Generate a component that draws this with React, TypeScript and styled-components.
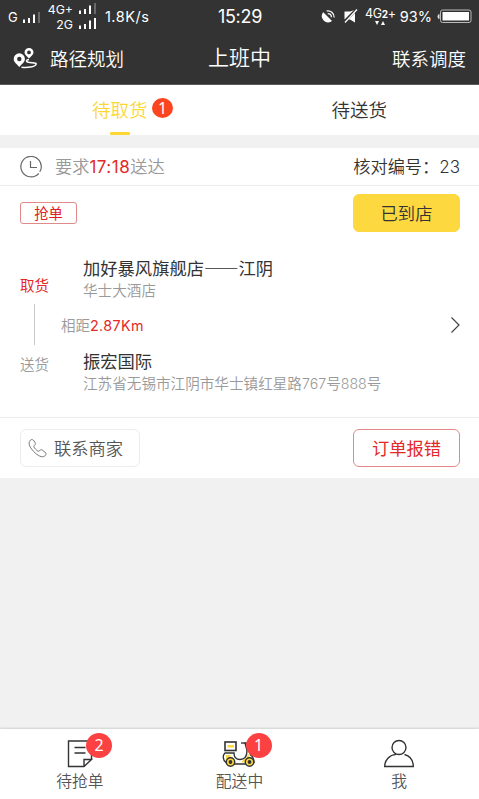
import React from 'react';
import styled, { createGlobalStyle } from 'styled-components';

const GlobalStyle = createGlobalStyle`
  *, *::before, *::after { box-sizing: border-box; }
  body { margin: 0; background: #f1f1f1; }
`;

const Screen = styled.div`
  display: flex;
  flex-direction: column;
  width: 479px;
  height: 799px;
  overflow: hidden;
  background: #f1f1f1;
  color: #333;
  font-family: 'Noto Sans CJK SC', sans-serif;
  font-weight: 350;
  white-space: nowrap;
  svg { display: block; flex: none; }
`;

const StatusBar = styled.header`
  display: grid;
  grid-template-columns: 1fr auto 1fr;
  align-items: center;
  height: 32px;
  padding: 0 7px 0 8px;
  background: #333;
  color: #fff;
  font-family: Inter, sans-serif;
  font-weight: 400;
`;
const StatusGroup = styled.div<{ $end?: boolean }>`
  display: flex;
  align-items: center;
  justify-content: ${(p) => (p.$end ? 'flex-end' : 'flex-start')};
`;
const Carrier = styled.div`
  display: flex;
  align-items: center;
  gap: 4px;
  font-size: 13px;
  line-height: 14px;
  padding-top: 2px;
`;
const SimStack = styled.div`
  display: flex;
  flex-direction: column;
  align-items: flex-end;
  margin-left: 7px;
  padding-top: 2px;
`;
const SimRow = styled.div`
  display: flex;
  align-items: center;
  gap: 5px;
  font-size: 12.3px;
  line-height: 15px;
  svg { margin-bottom: 2px; }
`;
const Speed = styled.span`
  margin-left: 8px;
  font-size: 14.5px;
  letter-spacing: 0.5px;
`;
const Clock = styled.time`
  font-size: 18px;
  letter-spacing: -0.3px;
`;
const Network = styled.div`
  display: flex;
  flex-direction: column;
  align-items: center;
  margin: 0 4px 0 7px;
  font-size: 12.5px;
  line-height: 13px;
  letter-spacing: -0.3px;
  b { font-size: 10px; }
`;
const Percent = styled.span`
  margin-right: 5px;
  font-size: 14.5px;
`;
const StatusIcon = styled.span`
  margin-right: 8px;
`;

const TitleBar = styled.div`
  display: grid;
  grid-template-columns: 1fr auto 1fr;
  align-items: center;
  height: 53px;
  padding: 0 13px;
  background: #333;
  border-bottom: 1px solid #5a5a5a;
  color: #fff;
  font-size: 18.5px;
  line-height: 52px;
`;
const RouteLink = styled.a`
  display: flex;
  align-items: center;
  gap: 12px;
`;
const Title = styled.h1`
  margin: 0;
  font-size: 21px;
  font-weight: 350;
  line-height: 48px;
  padding-bottom: 4px;
`;
const Dispatch = styled.a`
  text-align: right;
`;

const Tabs = styled.nav`
  display: grid;
  grid-template-columns: 1fr 1fr;
  flex: none;
  height: 50px;
  background: #fff;
`;
const Tab = styled.a<{ $active?: boolean }>`
  position: relative;
  display: flex;
  justify-content: center;
  font-size: 18.5px;
  line-height: 48px;
  color: ${(p) => (p.$active ? '#fdd835' : '#333')};
  &::after {
    content: '';
    display: ${(p) => (p.$active ? 'block' : 'none')};
    position: absolute;
    bottom: 0;
    width: 20px;
    height: 3px;
    border-radius: 1px;
    background: #fdd835;
  }
`;
const Badge = styled.span<{ $size: number; $left: number; $top: number; $color: string }>`
  position: absolute;
  left: ${(p) => p.$left}px;
  top: ${(p) => p.$top}px;
  width: ${(p) => p.$size}px;
  height: ${(p) => p.$size - 1}px;
  border-radius: 50%;
  background: ${(p) => p.$color};
  color: #fff;
  font-family: 'Noto Sans', sans-serif;
  font-size: 16px;
  font-weight: 400;
  line-height: ${(p) => p.$size - 1}px;
  text-align: center;
`;

const Card = styled.article`
  flex: none;
  height: 330px;
  margin-top: 13px;
  background: #fff;
`;
const CardHead = styled.div`
  display: flex;
  align-items: center;
  height: 38px;
  padding: 0 19px 0 20px;
  border-bottom: 1px solid #ececec;
  font-size: 17.2px;
  line-height: 38px;
`;
const Deadline = styled.div`
  flex: 1;
  margin-left: 13px;
  color: #999;
`;
const Accent = styled.span<{ $size?: number; $spacing?: number }>`
  color: #e42828;
  font-family: Inter, sans-serif;
  font-weight: 400;
  font-size: ${(p) => p.$size ?? 17}px;
  letter-spacing: ${(p) => p.$spacing ?? 0}px;
`;
const Figure = styled.span<{ $size?: number }>`
  font-family: Inter, sans-serif;
  font-weight: 350;
  font-size: ${(p) => p.$size ?? 14.2}px;
`;
const ActionRow = styled.div`
  display: flex;
  align-items: flex-start;
  justify-content: space-between;
  height: 66px;
  padding: 8px 19px 0 20px;
`;
const Tag = styled.span`
  width: 57px;
  height: 22px;
  margin-top: 8px;
  border: 1px solid #e08a8a;
  border-radius: 3px;
  color: #e02020;
  font-size: 14.3px;
  font-weight: 400;
  line-height: 20px;
  text-align: center;
`;
const Button = styled.button<{ $kind: 'primary' | 'danger' | 'plain' }>`
  display: flex;
  align-items: center;
  justify-content: ${(p) => (p.$kind === 'plain' ? 'flex-start' : 'center')};
  gap: 7px;
  width: ${(p) => (p.$kind === 'plain' ? 120 : 107)}px;
  height: 38px;
  padding: 0 7px;
  border: 1px solid ${(p) => ({ primary: '#fdd83f', danger: '#e08a8a', plain: '#ececec' })[p.$kind]};
  border-radius: 6px;
  background: ${(p) => (p.$kind === 'primary' ? '#fdd83f' : '#fff')};
  color: ${(p) => ({ primary: '#333', danger: '#e42828', plain: '#555' })[p.$kind]};
  font: inherit;
  font-weight: ${(p) => (p.$kind === 'danger' ? 400 : 350)};
  font-size: 17.3px;
  line-height: 36px;
`;

const Route = styled.section`
  display: grid;
  grid-template-columns: 41px 1fr auto;
  height: 165px;
  padding: 0 19px 0 20px;
`;
const Stages = styled.div`
  display: flex;
  flex-direction: column;
  padding-top: 21px;
`;
const Stage = styled.span<{ $active?: boolean }>`
  color: ${(p) => (p.$active ? '#e42828' : '#999')};
  font-size: 14.5px;
  font-weight: ${(p) => (p.$active ? 400 : 350)};
  line-height: 24px;
`;
const Connector = styled.i`
  width: 1px;
  height: 41px;
  margin: 7px 0 7px 14px;
  background: #c8c8c8;
`;
const Stops = styled.div`
  padding-top: 3px;
`;
const Place = styled.h2`
  margin: 0 0 0 22px;
  font-size: 17.3px;
  font-weight: 400;
  line-height: 25px;
`;
const Dash = styled.span`
  font-family: 'Noto Sans CJK JP', sans-serif;
  font-weight: 350;
  line-height: 1;
`;
const Address = styled.p`
  margin: 0 0 0 22px;
  color: #999;
  font-size: 14.6px;
  line-height: 20px;
`;
const Distance = styled.p`
  margin: 13px 0 10px;
  color: #999;
  font-size: 14.5px;
  line-height: 24px;
`;
const Arrow = styled.div`
  align-self: start;
  padding-top: 65px;
`;
const CardFoot = styled.footer`
  display: flex;
  justify-content: space-between;
  height: 61px;
  padding: 11px 19px 0 20px;
  border-top: 1px solid #ececec;
`;

const BottomNav = styled.nav`
  display: grid;
  grid-template-columns: repeat(3, 1fr);
  flex: none;
  height: 70px;
  margin-top: auto;
  background: #fff;
  box-shadow: 0 -1px 2px rgba(0, 0, 0, 0.14);
`;
const NavItem = styled.a`
  position: relative;
  display: flex;
  flex-direction: column;
  align-items: center;
  padding-top: 10px;
  color: #555;
  font-size: 15.8px;
  line-height: 24px;
  svg { margin-bottom: 1px; }
`;

function Signal({ full }: { full?: boolean }) {
  return (
    <svg width="19" height="11" viewBox="0 0 19 11">
      <path d="M2 11V7.500M7 11V6M12 11V2.500" stroke="#fff" strokeWidth="2" />
      <path d="M17 11V0" stroke={full ? '#fff' : '#696969'} strokeWidth="2" />
    </svg>
  );
}

function DishIcon() {
  return (
    <svg width="15" height="15" viewBox="0 0 15 15" fill="none" stroke="#fff">
      <path d="M2.300 4.400 9.800 11.900A5.500 5.500 0 0 1 2.300 4.400Z" fill="#fff" strokeWidth="1.500" />
      <path d="M5.500 2c4-1 7.700 2.200 7.700 6.500M6.700 4.700c2.100 0 3.700 1.400 3.700 3.500" strokeWidth="1.200" />
    </svg>
  );
}

function MuteIcon() {
  return (
    <svg width="14" height="14" viewBox="0 0 14 14">
      <path d="M.5 2.500H6L11 1v12.500L6 10.500H.5Z" fill="#fff" />
      <path d="M0 13 13 0" stroke="#333" strokeWidth="2.800" />
      <path d="M1 13.500 13 .5" stroke="#fff" strokeWidth="1.300" />
    </svg>
  );
}

function BatteryIcon() {
  return (
    <svg width="35" height="15" viewBox="0 0 35 15">
      <path d="M2.500 5Q.5 5 .5 7.500T2.500 10Z" fill="#ddd" />
      <rect x="3.500" y="1" width="30.500" height="12.500" rx="2" fill="none" stroke="#bbb" />
      <rect x="5.500" y="3" width="26.500" height="8.500" fill="#fff" />
    </svg>
  );
}

function RouteIcon() {
  return (
    <svg width="25" height="21" viewBox="0 0 25 21">
      <path
        fill="#fff"
        fillRule="evenodd"
        d="M6.300 5.300a5.600 5.600 0 0 0-5.600 5.600c0 3.200 3.300 5.200 5.600 8 2.300-2.800 5.600-4.800 5.600-8a5.600 5.600 0 0 0-5.600-5.600Zm0 3.500a2.200 2.200 0 1 1 0 4.400 2.200 2.200 0 0 1 0-4.400ZM16 0a4.500 4.500 0 0 0-4.500 4.500c0 2.300 2.600 3.800 4.500 6 1.900-2.200 4.500-3.700 4.500-6A4.500 4.500 0 0 0 16 0Zm0 2.500a1.900 1.900 0 1 1 0 3.800 1.900 1.900 0 0 1 0-3.800Z"
      />
      <path
        d="M16 11.500c-3 .3-3.500 2.300-.5 2.800 5 .700 8.500.400 7.500 2.200-1.300 2.500-8.500 3.500-14.500 2.700"
        fill="none"
        stroke="#fff"
        strokeWidth="1.500"
      />
    </svg>
  );
}

function ClockIcon() {
  return (
    <svg width="22" height="22" viewBox="0 0 22 22" fill="none" stroke="#666" strokeWidth="1.200">
      <path d="M18.800 17.300A10.200 10.200 0 1 1 20.700 14M20.700 14l-1 1.800M10.500 5v6.500H17" />
    </svg>
  );
}

function PhoneIcon() {
  return (
    <svg width="19" height="19" viewBox="0 0 19 19" fill="none" stroke="#777" strokeWidth="1">
      <path d="M2.300 1.300C3.700 0 5 .5 6 1.900l1 1.700c.8 1.300.3 2-.8 3-.9.700-.4 1.700 1.400 3.600s3 2.500 3.700 1.700c1-1.100 1.900-1.600 3-.8l2.600 2c1.500 1.200 1.500 2.300.2 3.600-2 1.900-5.400 1.300-9.900-2.700C2.500 9.700-.8 4.200 2.300 1.300Z" />
    </svg>
  );
}

function NoteIcon() {
  return (
    <svg width="26" height="29" viewBox="0 0 26 29" fill="none" stroke="#333" strokeWidth="1.400">
      <path d="M24.500 20.500V2H1.500v25.500H17l7.500-7H17v7M7.500 8.500h11M7.500 14h11" />
    </svg>
  );
}

function ScooterIcon() {
  return (
    <svg width="34" height="29" viewBox="0 0 34 29" fill="none" stroke="#333" strokeWidth="1.400">
      <path
        d="M3 14h9c0 5 2.500 6.500 6 6.500 5 0 7-4 7-9l-2-7.500h3l2.500 12c2.500 1.500 3.500 4 3.500 7.500H29L23 25H12l-8-1.500C.5 21 .5 16 3 14Z"
        fill="#fff"
      />
      <path d="M4 16h4.500c0 3.500 2 6 5.500 6.500l-1 1.500H4ZM26 14l-1 4c-2 1-3 3-5 4v1.500l5-.5c1-2 2-4 2.500-4Z" fill="#fdd83f" stroke="none" />
      <path d="M19 4h4" />
      <rect x="3" y="3" width="11" height="8.500" fill="#fff" strokeWidth="1.600" />
      <path d="M5.500 6h6.500v2.500H5.500Z" fill="#fdd83f" stroke="none" />
      <circle cx="8.500" cy="23" r="4.200" fill="#fdd83f" />
      <circle cx="27.500" cy="23" r="4.200" fill="#fdd83f" />
      <circle cx="8.500" cy="23" r="1.200" fill="#333" />
      <circle cx="27.500" cy="23" r="1.200" fill="#333" />
    </svg>
  );
}

function PersonIcon() {
  return (
    <svg width="32" height="29" viewBox="0 0 32 29" fill="none" stroke="#333" strokeWidth="1.400">
      <circle cx="16" cy="8.500" r="7" />
      <path d="M13 15.400C6.500 16 1.700 21 1.700 27.500h28.600c0-6.300-3.500-10.500-8.800-12" />
    </svg>
  );
}

export default function App() {
  return (
    <Screen lang="zh-CN">
      <GlobalStyle />
      <StatusBar>
        <StatusGroup>
          <Carrier>G <Signal /></Carrier>
          <SimStack>
            <SimRow>4G+ <Signal /></SimRow>
            <SimRow>2G <Signal full /></SimRow>
          </SimStack>
          <Speed>1.8K/s</Speed>
        </StatusGroup>
        <Clock>15:29</Clock>
        <StatusGroup $end>
          <StatusIcon><DishIcon /></StatusIcon>
          <MuteIcon />
          <Network>
            <span>4G<b>2</b>+</span>
            <svg width="10" height="4" viewBox="0 0 10 4" fill="#fff">
              <path d="M0 0h4L2 4ZM6 4h4L8 0Z" />
            </svg>
          </Network>
          <Percent>93%</Percent>
          <BatteryIcon />
        </StatusGroup>
      </StatusBar>
      <TitleBar>
        <RouteLink><RouteIcon />路径规划</RouteLink>
        <Title>上班中</Title>
        <Dispatch>联系调度</Dispatch>
      </TitleBar>

      <Tabs>
        <Tab $active>
          待取货
          <Badge $size={21} $left={152} $top={13} $color="#fb4420">1</Badge>
        </Tab>
        <Tab>待送货</Tab>
      </Tabs>

      <Card>
        <CardHead>
          <ClockIcon />
          <Deadline>要求<Accent $spacing={0.5}>17:18</Accent>送达</Deadline>
          <div>核对编号：<Figure $size={17}>23</Figure></div>
        </CardHead>
        <ActionRow>
          <Tag>抢单</Tag>
          <Button $kind="primary">已到店</Button>
        </ActionRow>
        <Route>
          <Stages>
            <Stage $active>取货</Stage>
            <Connector />
            <Stage>送货</Stage>
          </Stages>
          <Stops>
            <Place>加好暴风旗舰店<Dash lang="ja">——</Dash>江阴</Place>
            <Address>华士大酒店</Address>
            <Distance>相距<Accent $size={14.3} $spacing={0.4}>2.87Km</Accent></Distance>
            <Place>振宏国际</Place>
            <Address>江苏省无锡市江阴市华士镇红星路<Figure>767</Figure>号<Figure>888</Figure>号</Address>
          </Stops>
          <Arrow>
            <svg width="9" height="16" viewBox="0 0 9 16" fill="none" stroke="#444" strokeWidth="1.200">
              <path d="m.5.500 7.500 7.500-7.500 7.500" />
            </svg>
          </Arrow>
        </Route>
        <CardFoot>
          <Button $kind="plain"><PhoneIcon />联系商家</Button>
          <Button $kind="danger">订单报错</Button>
        </CardFoot>
      </Card>

      <BottomNav>
        <NavItem>
          <NoteIcon />待抢单
          <Badge $size={26} $left={86} $top={4} $color="#fb4141">2</Badge>
        </NavItem>
        <NavItem>
          <ScooterIcon />配送中
          <Badge $size={26} $left={86} $top={4} $color="#fb4141">1</Badge>
        </NavItem>
        <NavItem><PersonIcon />我</NavItem>
      </BottomNav>
    </Screen>
  );
}
